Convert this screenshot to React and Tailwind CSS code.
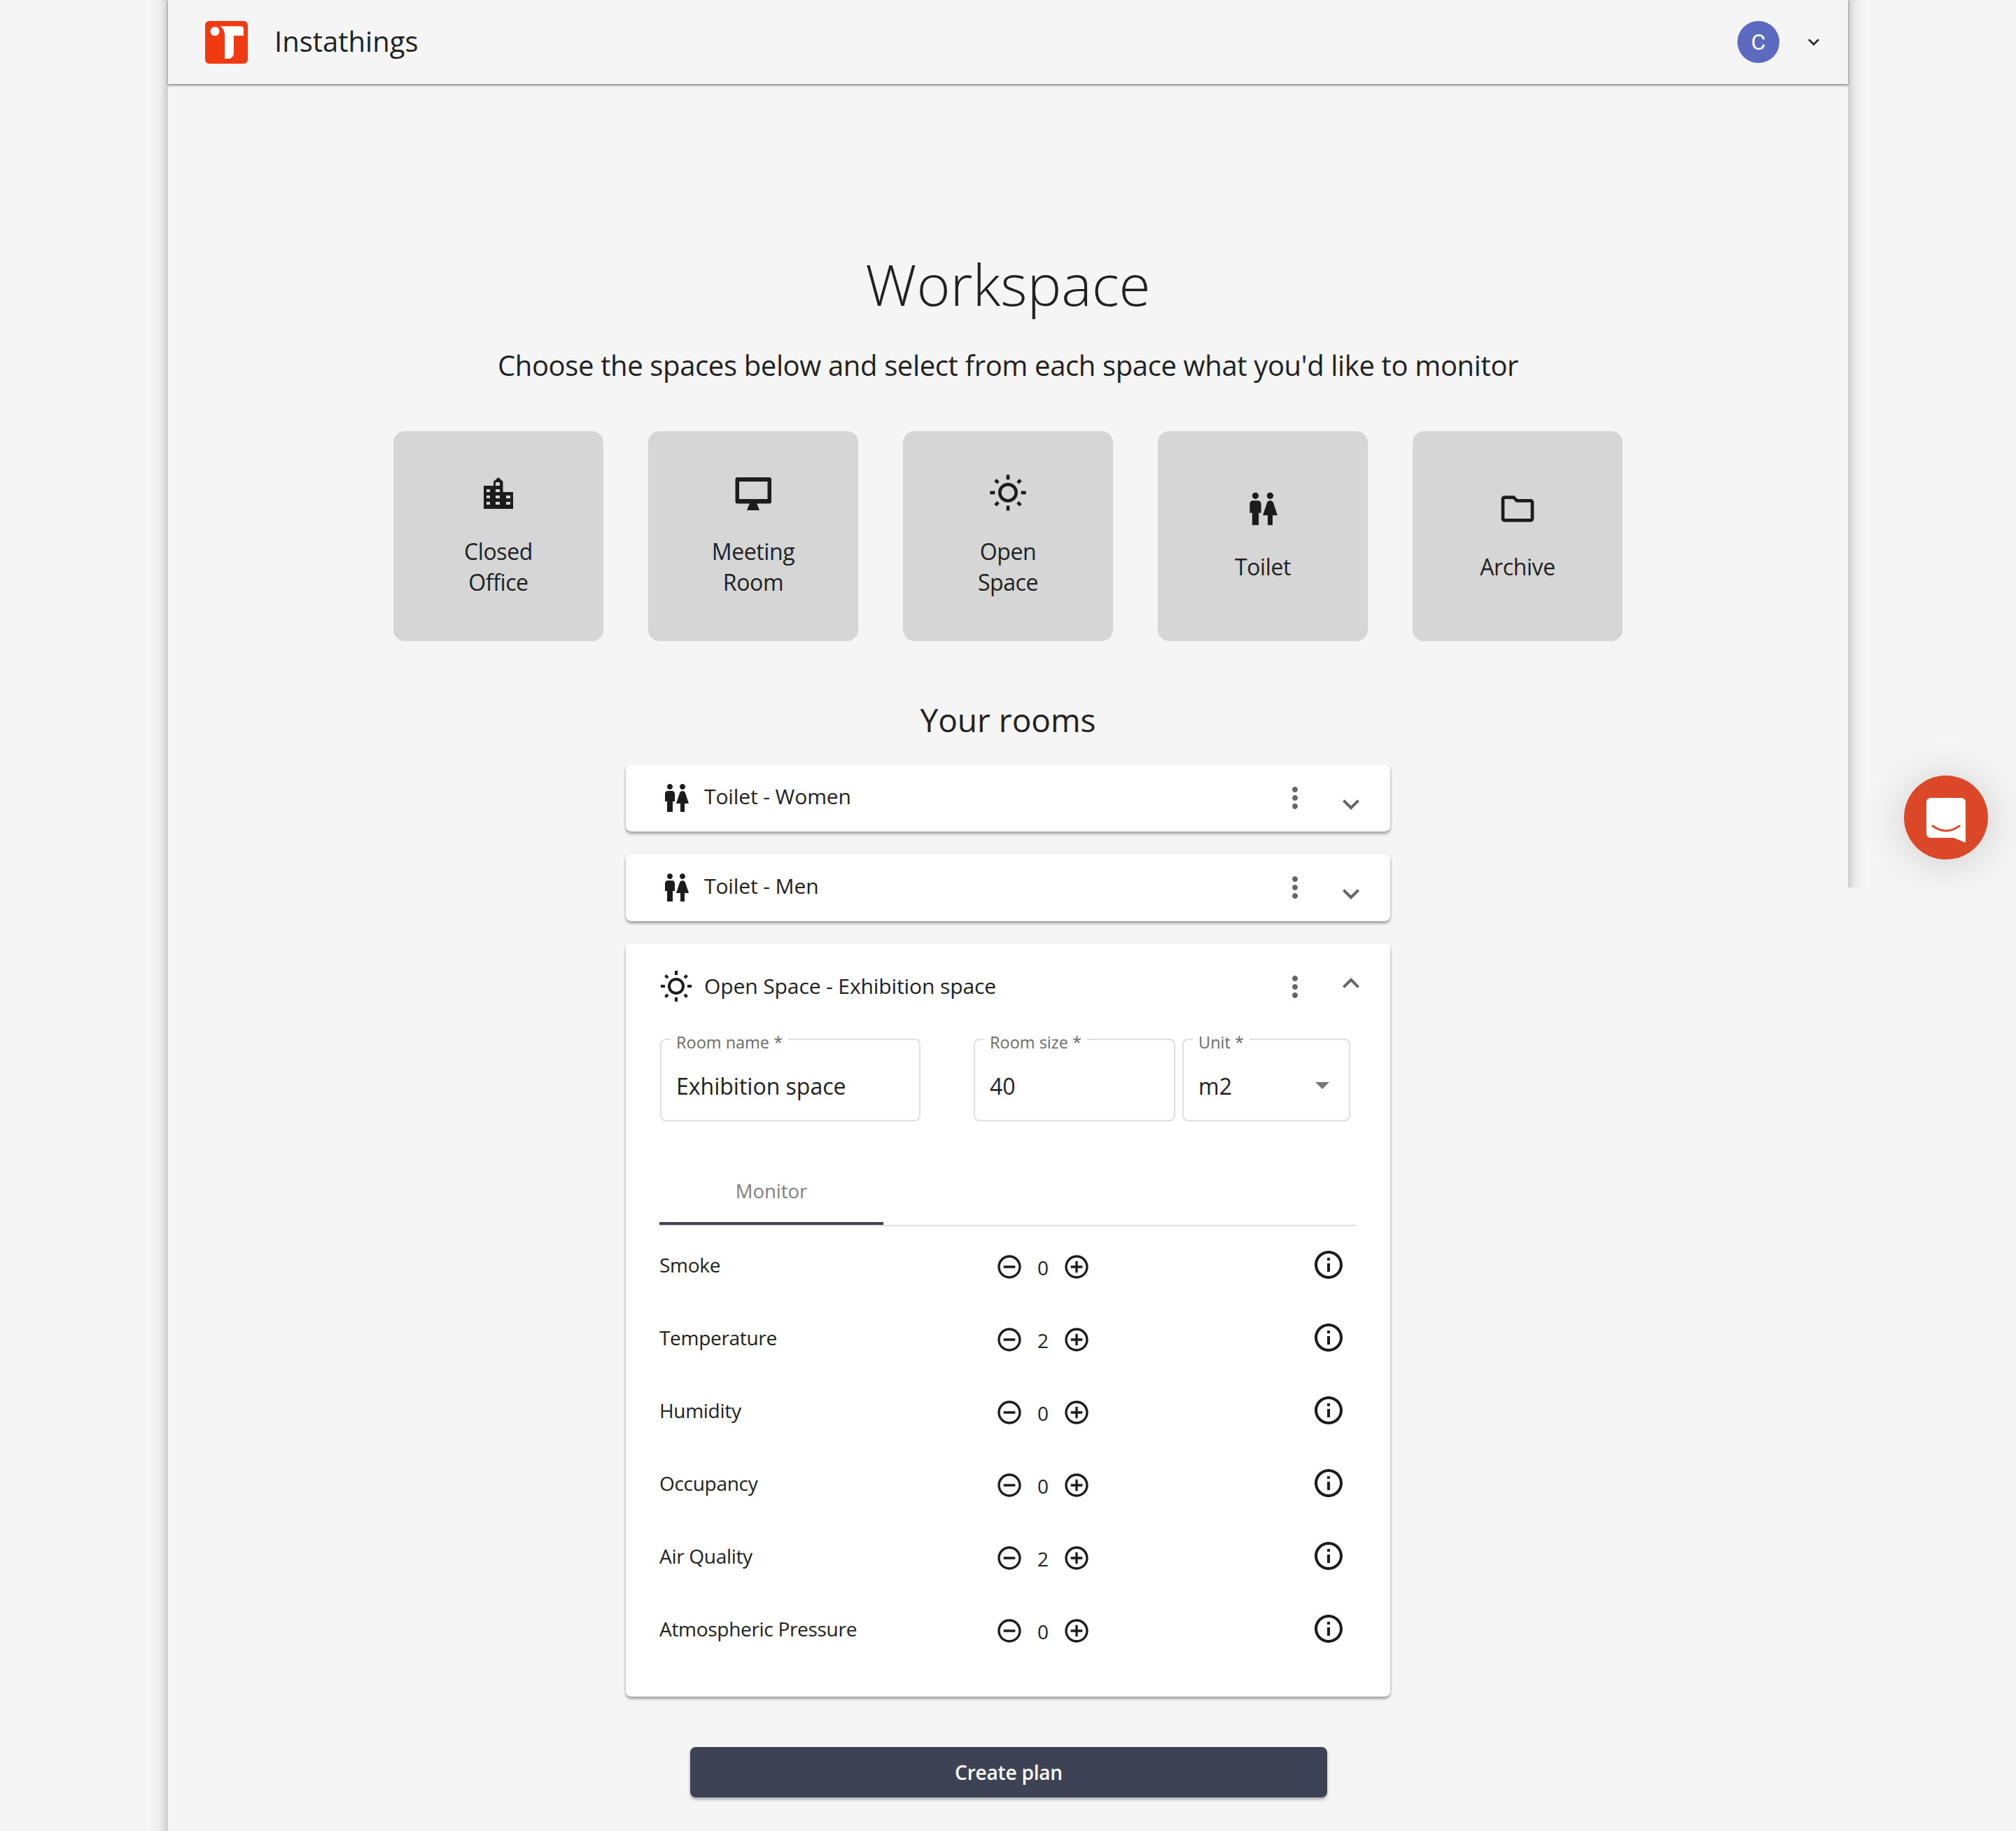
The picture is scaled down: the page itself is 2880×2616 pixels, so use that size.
import React from "react";
import { MdWc, MdOutlineFolder, MdOutlineWbSunny, MdMoreVert, MdExpandMore, MdExpandLess, MdKeyboardArrowDown, MdArrowDropDown, MdOutlineRemoveCircleOutline, MdOutlineAddCircleOutline, MdInfoOutline } from "react-icons/md";

function Logo() {
  return (
    <svg width="61" height="61" viewBox="0 0 61 61" className="shrink-0">
      <rect width="61" height="61" rx="6" fill="#ef3a12" />
      <circle cx="14" cy="14.7" r="6.5" fill="#fff" />
      <path d="M21 7.5H51a4 4 0 0 1 4 4V21H41V46a8 8 0 0 1-8 8H28V21C28 14 25 9 21 7.5Z" fill="#fff" />
    </svg>
  );
}

function Building() {
  return (
    <svg width="56" height="56" viewBox="0 0 56 56">
      <path
        transform="translate(7 5)"
        fillRule="evenodd"
        fill="#1c1c1c"
        d="M0 12H14V6L21 0L27.5 6V21H42V45H0ZM17 7h6v5h-6zM4 17h5v4H4zM17 17h6v4h-6zM4 26h5v4H4zM17 26h6v4h-6zM32 26h6v4h-6zM4 35h5v4H4zM17 35h6v4h-6zM32 35h6v4h-6z"
      />
    </svg>
  );
}

function Desktop() {
  return (
    <svg width="56" height="56" viewBox="0 0 56 56">
      <path
        fillRule="evenodd"
        fill="#1c1c1c"
        d="M5.5 5H51a3 3 0 0 1 3 3V39.5a3 3 0 0 1-3 3H5.5a3 3 0 0 1-3-3V8a3 3 0 0 1 3-3ZM8 11V36H48.5V11Z"
      />
      <path fill="#1c1c1c" d="M23 42H33L37 52H19Z" />
    </svg>
  );
}

const spaces = [
  { icon: <Building />, lines: ["Closed", "Office"] },
  { icon: <Desktop />, lines: ["Meeting", "Room"] },
  { icon: <MdOutlineWbSunny size={56} color="#1c1c1c" />, lines: ["Open", "Space"] },
  { icon: <MdWc size={56} color="#1c1c1c" />, lines: ["Toilet"] },
  { icon: <MdOutlineFolder size={56} color="#1c1c1c" />, lines: ["Archive"] },
];

function SpaceCard({ icon, lines }) {
  return (
    <div className="w-[300px] h-[300px] rounded-2xl bg-[#d6d6d6] flex flex-col items-center justify-center">
      <div className="h-14 w-14">{icon}</div>
      <div className="mt-[33px] mb-px text-[32px] leading-[44px] text-center text-[#212121] tracking-[-0.4px]">
        {lines.map((l) => (
          <div key={l}>{l}</div>
        ))}
      </div>
    </div>
  );
}

function CollapsedRoom({ title }) {
  return (
    <div className="h-24 rounded-lg bg-white shadow-[0_3px_4px_rgba(0,0,0,0.38)] flex items-center pl-12 pr-8">
      <MdWc size={48} color="#1c1c1c" className="shrink-0" />
      <span className="ml-4 text-[30px] text-[#212121] flex-1 -mt-[6px] tracking-[-0.1px]">{title}</span>
      <MdMoreVert size={48} color="#666666" />
      <MdExpandMore size={48} color="#666666" className="ml-8 mt-[18px]" />
    </div>
  );
}

function Field({ label, value, className, children }) {
  return (
    <div className={"relative h-[118px] rounded-lg border-2 border-[#e0e0e0] flex items-center pl-[21px] pt-[18px] text-[32px] text-[#212121] " + className}>
      <span className="absolute left-[13px] -top-[12px] bg-white px-2 text-[23.5px] leading-[30px] text-[#6b6b6b]">{label}</span>
      <span>{value}</span>
      {children}
    </div>
  );
}

const sensors = [
  ["Smoke", 0],
  ["Temperature", 2],
  ["Humidity", 0],
  ["Occupancy", 0],
  ["Air Quality", 2],
  ["Atmospheric Pressure", 0],
];

function SensorRow({ name, value }) {
  return (
    <div className="h-[104px] flex items-center text-[28px] text-[#212121]">
      <span className="w-[480px] -mt-[5px] tracking-[-0.3px]">{name}</span>
      <MdOutlineRemoveCircleOutline size={40} color="#1c1c1c" className="mt-0.5" />
      <span className="w-[56px] text-center mt-1">{value}</span>
      <MdOutlineAddCircleOutline size={40} color="#1c1c1c" className="mt-0.5" />
      <span className="flex-1" />
      <MdInfoOutline size={48} color="#1c1c1c" className="-mt-1 mr-4" />
    </div>
  );
}

export default function App() {
  return (
    <div className="relative w-[2880px] min-h-[2616px] bg-[#f5f5f5] overflow-hidden font-['Open_Sans','Noto_Sans',sans-serif]">
      <div className="relative ml-[240px] w-[2400px] h-[2616px] flex flex-col">
        <div className="absolute top-0 bottom-0 -left-[26px] w-[26px] bg-linear-to-l from-[#cfcfcf] via-[#ebebeb] via-40% to-transparent" />
        <div className="absolute top-0 h-[1268px] -right-[26px] w-[26px] bg-linear-to-r from-[#cfcfcf] via-[#ebebeb] via-40% to-transparent" />

        <header className="relative h-[120px] shrink-0 flex items-center pl-[53px] pr-[33px] bg-[#f5f5f5] shadow-[0_2px_3px_rgba(0,0,0,0.45)]">
          <Logo />
          <span className="ml-[38px] text-[40px] text-[#212121] font-medium -mt-0.5">Instathings</span>
          <span className="flex-1" />
          <div className="w-[60px] h-[60px] rounded-full bg-[#5c6bc0] text-white flex items-center justify-center text-[32px] font-['Roboto',sans-serif]">C</div>
          <MdKeyboardArrowDown size={32} color="#212121" className="ml-[33px]" />
        </header>

        <main className="flex flex-col items-center">
          <h1 className="mt-[225px] h-[120px] leading-[120px] text-[82px] font-light text-[#212121]">Workspace</h1>
          <p className="mt-[27px] h-[60px] leading-[60px] text-[40px] text-[#212121] tracking-[-0.36px]">Choose the spaces below and select from each space what you'd like to monitor</p>
          <div className="mt-16 flex gap-16">
            {spaces.map((s) => (
              <SpaceCard key={s.lines[0]} {...s} />
            ))}
          </div>
          <h2 className="mt-[82px] h-[60px] leading-[60px] text-[46px] text-[#212121]">Your rooms</h2>

          <div className="mt-[34px] w-[1092px] flex flex-col gap-8">
            <CollapsedRoom title="Toilet - Women" />
            <CollapsedRoom title="Toilet - Men" />
            <div className="rounded-lg bg-white shadow-[0_3px_4px_rgba(0,0,0,0.38)] pt-[38px] pb-[43px] pl-12 pr-12">
              <div className="flex items-center h-12 -mr-4">
                <MdOutlineWbSunny size={48} color="#1c1c1c" className="shrink-0" />
                <span className="ml-4 text-[30px] text-[#212121] flex-1 -mt-1 tracking-[-0.1px]">Open Space - Exhibition space</span>
                <MdMoreVert size={48} color="#666666" />
                <MdExpandLess size={48} color="#666666" className="ml-8 -mt-[10px]" />
              </div>
              <div className="mt-[50px] ml-px flex">
                <Field label="Room name *" value="Exhibition space" className="w-[372px] mr-[76px]" />
                <Field label="Room size *" value="40" className="w-[288px] mr-[10px]" />
                <Field label="Unit *" value="m2" className="w-[240px]">
                  <MdArrowDropDown size={48} color="#757575" className="absolute right-[14px] top-[40px]" />
                </Field>
              </div>
              <div className="mt-[51px] border-b-2 border-[#e0e0e0]">
                <div className="w-80 h-[97px] border-b-4 border-[#3c4252] flex items-center justify-center pt-[5px] text-[27.5px] text-[#808080]">Monitor</div>
              </div>
              <div className="mt-[5px]">
                {sensors.map(([n, v]) => (
                  <SensorRow key={n} name={n} value={v} />
                ))}
              </div>
            </div>
          </div>

          <button className="mt-[72px] ml-[2px] w-[910px] h-[72px] rounded-lg bg-[#3d4354] text-white text-[28px] font-semibold tracking-[-0.2px] shadow-[0_3px_4px_rgba(0,0,0,0.3)]">Create plan</button>
        </main>
      </div>

      <div className="absolute left-[2640px] top-0 w-[240px] h-[1268px] overflow-hidden">
        <div className="absolute left-20 top-[1108px] w-[120px] h-[120px] rounded-full bg-[#db4827] shadow-[0_4px_60px_rgba(0,0,0,0.17)] flex items-center justify-center">
          <svg width="56" height="64" viewBox="0 0 56 64" className="mt-[8px]">
            <path d="M6 0H50a6 6 0 0 1 6 6V64L39 57H6a6 6 0 0 1-6-6V6a6 6 0 0 1 6-6Z" fill="#fff" />
            <path d="M9 40Q28 54 47 40" fill="none" stroke="#db4827" strokeWidth="3" strokeLinecap="round" />
          </svg>
        </div>
      </div>
    </div>
  );
}
